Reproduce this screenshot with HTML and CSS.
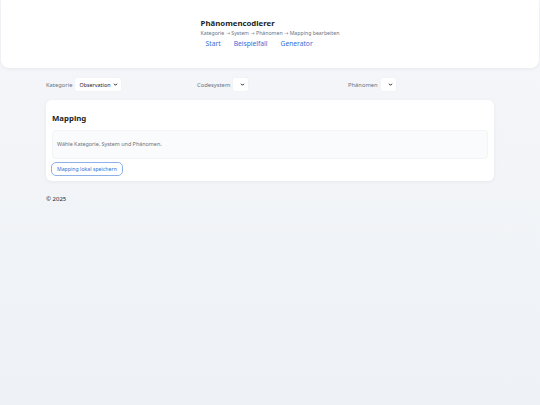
FILE: index.html
```html
<!DOCTYPE html>
<html lang="de">
<head>
<meta charset="utf-8">
<title>Phänomencodierer</title>
<link rel="stylesheet" href="styles.css">
</head>
<body>
<header class="site-header">
  <div class="brand">
    <div class="title">Phänomencodierer</div>
    <div class="crumbs">Kategorie <span class="arrow">→</span> System <span class="arrow">→</span> Phänomen <span class="arrow">→</span> Mapping bearbeiten</div>
    <nav class="nav">
      <a href="#">Start</a>
      <a href="#">Beispielfall</a>
      <a href="#">Generator</a>
    </nav>
  </div>
</header>
<main class="main">
  <div class="filters">
    <label class="field">
      <span class="field-label">Kategorie</span>
      <span class="select-wrap wide">
        <select class="select"><option>Observation</option></select>
        <svg class="chev" viewBox="0 0 10 10" width="5" height="5"><path d="M2 3.5 L5 6.5 L8 3.5" fill="none" stroke="#222" stroke-width="2"/></svg>
      </span>
    </label>
    <label class="field">
      <span class="field-label">Codesystem</span>
      <span class="select-wrap">
        <select class="select"><option></option></select>
        <svg class="chev" viewBox="0 0 10 10" width="5" height="5"><path d="M2 3.5 L5 6.5 L8 3.5" fill="none" stroke="#222" stroke-width="2"/></svg>
      </span>
    </label>
    <label class="field">
      <span class="field-label">Phänomen</span>
      <span class="select-wrap">
        <select class="select"><option></option></select>
        <svg class="chev" viewBox="0 0 10 10" width="5" height="5"><path d="M2 3.5 L5 6.5 L8 3.5" fill="none" stroke="#222" stroke-width="2"/></svg>
      </span>
    </label>
  </div>
  <section class="card">
    <h2 class="card-title">Mapping</h2>
    <div class="hint">Wähle Kategorie, System und Phänomen.</div>
    <button class="btn" type="button">Mapping lokal speichern</button>
  </section>
  <footer class="footer">© 2025</footer>
</main>
</body>
</html>
```
FILE: styles.css
```css
* { box-sizing: border-box; }
html, body { height: 100%; }
body {
  margin: 0;
  font-family: "Noto Sans", "Open Sans", sans-serif;
  color: #1f2430;
  background: linear-gradient(180deg, #f5f6f9 0%, #eef2f6 100%);
}
.site-header {
  margin: 0 1px;
  height: 68px;
  background: #ffffff;
  border-radius: 0 0 8px 8px;
  box-shadow: 0 1px 3px rgba(30, 40, 60, 0.06);
  display: flex;
  justify-content: center;
  padding-top: 18px;
}
.brand { display: flex; flex-direction: column; }
.title {
  font-size: 7.8px;
  font-weight: 700;
  line-height: 11px;
  color: #1b1f28;
}
.crumbs {
  font-size: 5.2px;
  line-height: 8px;
  color: #6b7280;
}
.arrow { font-family: "DejaVu Sans", sans-serif; }
.nav {
  display: flex;
  gap: 3px;
  margin-top: 2px;
}
.nav a {
  font-size: 6.7px;
  line-height: 10px;
  padding: 0 5px;
  color: #2f6fd6;
  text-decoration: none;
}
.main { padding: 0 46px; }
.filters {
  display: grid;
  grid-template-columns: repeat(3, 146px);
  column-gap: 5px;
  margin-top: 9px;
}
.field { display: flex; align-items: center; gap: 2px; }
.field-label { font-size: 5.8px; color: #6b7280; }
.select-wrap {
  position: relative;
  display: inline-flex;
  width: 17px;
  height: 15px;
}
.select-wrap.wide { width: 48px; }
.select {
  appearance: none;
  -webkit-appearance: none;
  width: 100%;
  height: 100%;
  border: 1px solid #f1f3f6;
  border-radius: 3px;
  background: #ffffff;
  font-family: inherit;
  font-size: 5.4px;
  color: #1f2430;
  padding: 0 6px 0 4px;
}
.chev {
  position: absolute;
  right: 4px;
  top: 5px;
  pointer-events: none;
}
.card {
  margin-top: 8px;
  background: #ffffff;
  border-radius: 6px;
  box-shadow: 0 1px 4px rgba(30, 40, 60, 0.05);
  padding: 12px 6px 5px 5px;
  height: 81px;
}
.card-title {
  margin: 0;
  font-size: 7.8px;
  font-weight: 700;
  line-height: 12px;
  color: #1b1f28;
  padding-left: 1px;
}
.hint {
  margin-top: 6px;
  margin-left: 1px;
  height: 29px;
  background: #fafbfc;
  border: 1px solid #f2f4f7;
  border-radius: 4px;
  font-size: 5.4px;
  line-height: 9px;
  color: #6b7280;
  padding: 9px 4px;
}
.btn {
  display: block;
  margin-top: 3px;
  height: 14px;
  padding: 0 5px;
  font-family: inherit;
  font-size: 5.2px;
  color: #2f6fd6;
  background: #ffffff;
  border: 1px solid #8fb1e8;
  border-radius: 5px;
}
.footer {
  margin-top: 14px;
  font-size: 6px;
  color: #1f2430;
}
```
